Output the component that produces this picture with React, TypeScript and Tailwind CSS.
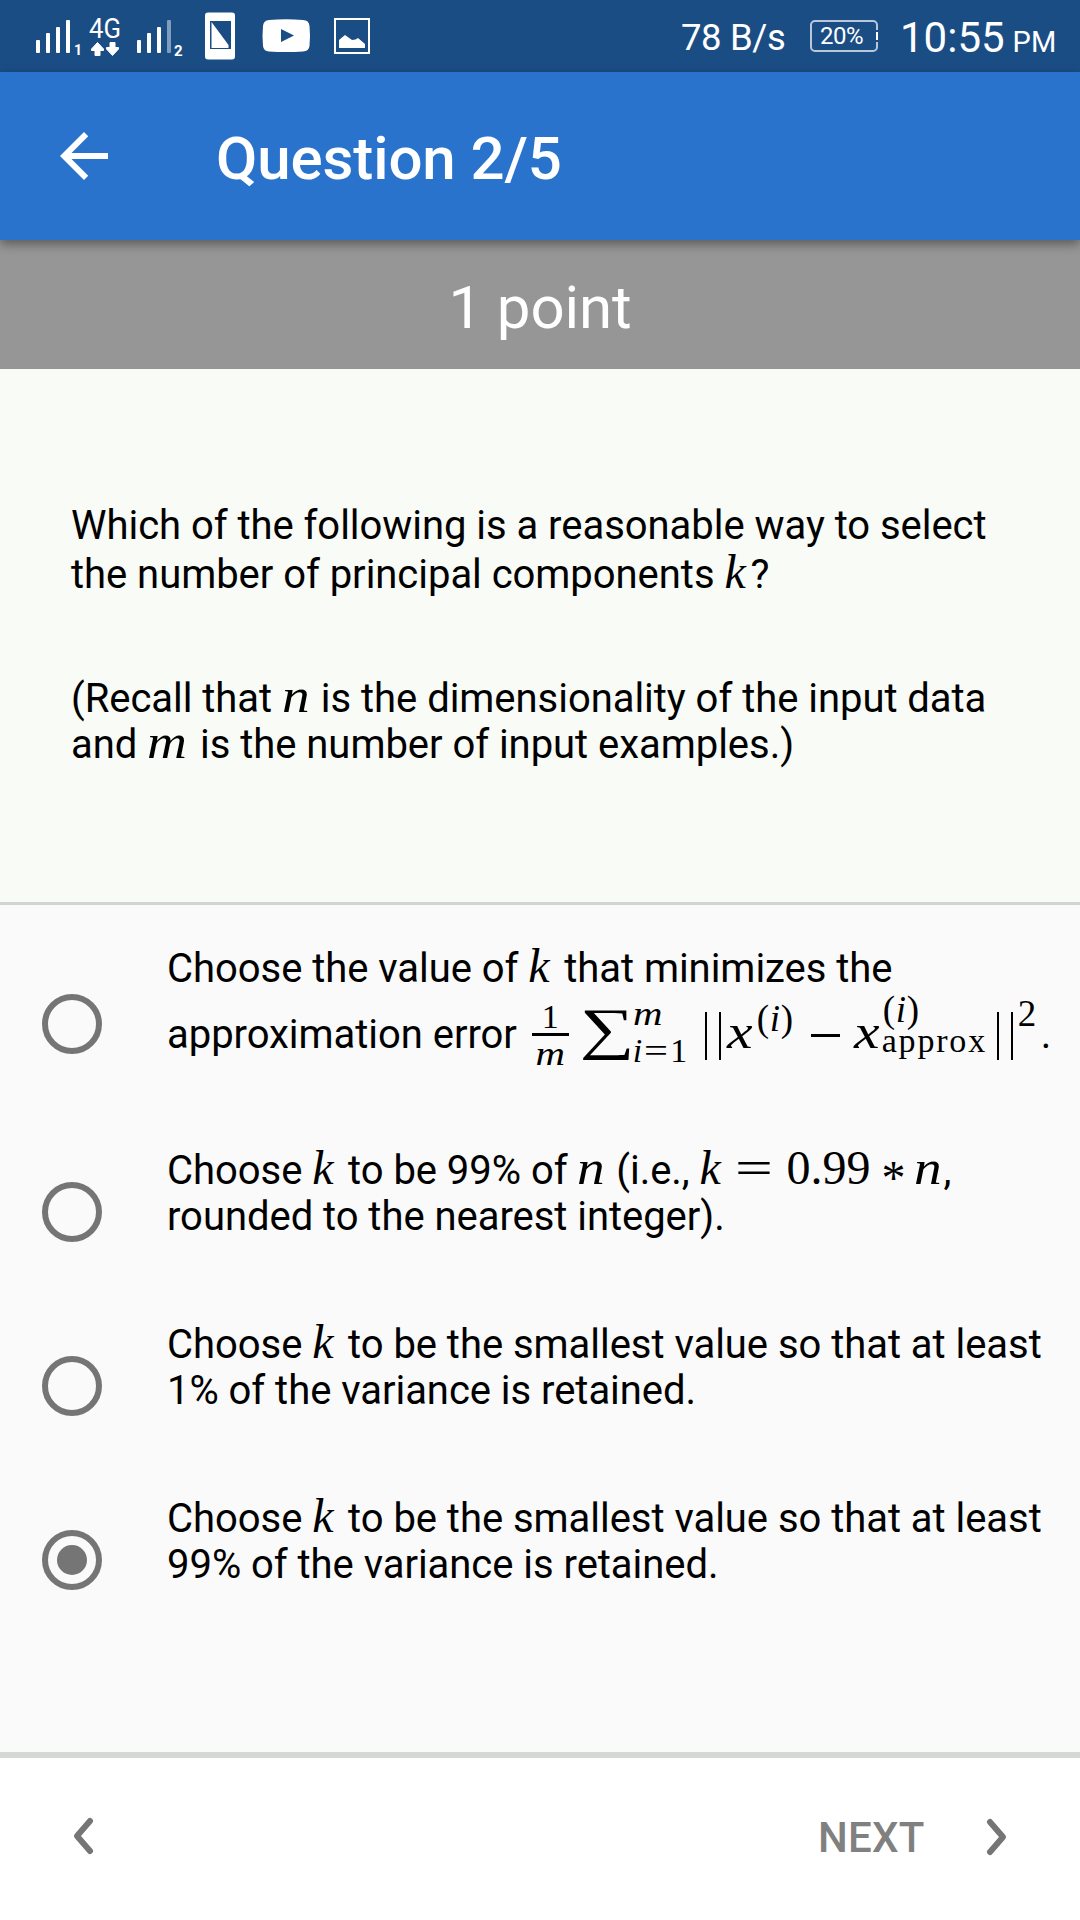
import type { ReactNode } from "react";

function V({ children, w = "w-[26px]" }: { children: ReactNode; w?: string }) {
  return (
    <span className={`inline-block origin-left font-['Liberation_Serif',serif] text-[48px] leading-[0] italic ${w}`}>{children}</span>
  );
}

function Line({ children, h = "h-[46px]" }: { children: ReactNode; h?: string }) {
  return <div className={`whitespace-nowrap leading-[46px] tracking-[-0.04px] ${h}`}>{children}</div>;
}

function Option({ children, checked, h, radio }: { children: ReactNode; checked?: boolean; h: string; radio: string }) {
  return (
    <div className={`flex shrink-0 ${h}`}>
      <div className={`ml-[42px] flex size-[60px] shrink-0 items-center justify-center rounded-full border-6 border-[#757575] ${radio}`}>
        {checked && <div className="size-[30px] rounded-full bg-[#757575]" />}
      </div>
      <div className="ml-[65px]">{children}</div>
    </div>
  );
}

function Bars() {
  return (
    <span className="inline-flex h-[48px] w-[16px] justify-between align-[-12px]">
      <span className="w-[2px] bg-black" />
      <span className="w-[2px] bg-black" />
    </span>
  );
}

function Formula() {
  return (
    <span className="font-['Liberation_Serif',serif] text-[34px]">
      <span className="-mt-[20px] ml-[5px] inline-flex h-[63px] w-[37px] flex-col items-center align-[20px] leading-none">
        <span className="h-[30px] shrink-0 leading-[27px]">1</span>
        <span className="h-[3px] w-full shrink-0 bg-black" />
        <span className="h-[30px] scale-x-120 italic leading-[36px]">m</span>
      </span>
      <span className="ml-[11px] inline-block w-[51px] origin-left scale-x-135 align-[0px] text-[57px] leading-[0]">∑</span>
      <span className="ml-[2px] inline-block w-0 align-[23px] italic leading-[0]"><span className="inline-block origin-left scale-x-120">m</span></span>
      <span className="inline-block w-[72px] align-[-14px] leading-[0]"><i>i</i><span className="ml-[2px] inline-block origin-left scale-x-125">=</span><span className="ml-[7px]">1</span></span>
      <Bars />
      <span className="ml-[6px] inline-block w-[30px] origin-left scale-x-120 text-[48px] italic leading-[0]">x</span>
      <span className="inline-block w-[54px] align-[17px] text-[37px] leading-[0] tracking-[0.7px]">(<i>i</i>)</span>
      <span className="inline-block h-[3px] w-[29px] bg-black align-[11px]" />
      <span className="ml-[14px] inline-block w-[29px] origin-left scale-x-120 text-[48px] italic leading-[0]">x</span>
      <span className="-mt-[8px] inline-block w-0 align-[26px] text-[37px] leading-[0] tracking-[0.7px]">(<i>i</i>)</span>
      <span className="-ml-[1px] inline-block w-[115px] align-[-4px] leading-[0] tracking-[1.8px]">approx</span>
      <Bars />
      <span className="ml-[5px] inline-block w-[23px] align-[22px] text-[37px] leading-[0]">2</span>
    </span>
  );
}

export default function App() {
  return (
    <div className="flex h-[1920px] w-[1080px] flex-col overflow-hidden bg-[#fafafa] font-[Roboto,sans-serif] text-[40px] text-black">
      <header className="flex h-[72px] shrink-0 items-start bg-[#1b4d85] text-white">
        <svg width="400" height="72" viewBox="0 0 400 72" fill="none" className="shrink-0">
          <g fill="#fff">
            <rect x="36" y="40" width="4" height="13" rx="1" />
            <rect x="46" y="33" width="4" height="20" rx="1" />
            <rect x="56" y="27" width="4" height="26" rx="1" />
            <rect x="66" y="20" width="4" height="33" rx="1" />
            <rect x="137" y="40" width="4" height="13" rx="1" />
            <rect x="147" y="33" width="4" height="20" rx="1" />
            <rect x="157" y="27" width="4" height="26" rx="1" />
            <rect x="167" y="20" width="4" height="33" rx="1" opacity=".45" />
            <path strokeLinejoin="round" stroke="#fff" strokeWidth="1" d="M97.500 42.500l6 6.500v1.500h-3.500v5h-5v-5h-3.500V49zM112.500 55.500l-6-6.500v-1.500h3.500v-5h5v5h3.500V49z" />
            <path fillRule="evenodd" d="M208 12.500h24q3 0 3 3v41q0 3-3 3h-24q-3 0-3-3v-41q0-3 3-3zM210 21v28h21V21z" />
            <path d="M211.500 22L228.500 45v3h-17z" />
            <path fillRule="evenodd" d="M269 20q17-1.500 34 0q6 0 6.500 6q1 10 0 20q-.5 5-6.500 5.500q-17 1-34 0q-5.500-.5-6-5.500q-1-10 0-20q.5-5.500 6-6zM281 29v13l13-6.500z" />
            <path d="M339 48v-8l6-5 7 5q4 0 6-2l7 6v4z" />
          </g>
          <rect x="335" y="19" width="34" height="34" stroke="#fff" strokeWidth="2" />
          <text x="89" y="37.500" fontFamily="Roboto" fontSize="28" textLength="32" lengthAdjust="spacingAndGlyphs" fill="#fff">4G</text>
          <text x="74" y="55" fontFamily="Roboto" fontWeight="700" fontSize="14" fill="#fff">1</text>
          <text x="174" y="55.500" fontFamily="Roboto" fontWeight="700" fontSize="15" fill="#fff">2</text>
        </svg>
        <span className="ml-[281px] w-[129px] whitespace-nowrap text-[36.500px] leading-[75px] tracking-[-0.4px]">78 B/s</span>
        <span className="mt-[20px] flex h-[32px] w-[68px] shrink-0 items-center rounded-[5px] border-2 border-[#b8c8da] pl-[8px] text-[24px] tracking-[-0.5px]">
          20%
          <svg width="3" height="12" viewBox="0 0 3 12" className="-mr-[2px] ml-auto"><path d="M1.500 0V12" stroke="#1b4d85" strokeWidth="3" /><path d="M2 2V10" stroke="#fff" strokeWidth="2" /></svg>
        </span>
        <span className="ml-[22px] whitespace-nowrap text-[42px] leading-[75px]">10:55<span className="ml-[8px] text-[29px]">PM</span></span>
      </header>

      <div className="z-10 flex h-[168px] shrink-0 items-center bg-[#2a73cc] text-white shadow-[0_4px_10px_rgba(0,0,0,0.4)]">
        <svg width="72" height="72" viewBox="0 0 24 24" fill="#fff" className="ml-[48px]"><path d="M20 11H7.830l5.590-5.590L12 4l-8 8 8 8 1.410-1.410L7.830 13H20v-2z" /></svg>
        <h1 className="ml-[96px] mt-[5px] text-[60px] font-medium leading-[70px] tracking-[-0.1px]">Question 2/5</h1>
      </div>

      <div className="flex h-[129px] shrink-0 justify-center bg-[#969696] text-[60px] leading-[135px] tracking-[-0.1px] text-white">1 point</div>

      <section className="h-[536px] shrink-0 border-b-[3px] border-[#d3d3d3] bg-[#f9fbf6] pl-[71px] pt-[134px]">
        <Line h="h-[49px]">Which of the following is a reasonable way to select</Line>
        <Line h="h-[124px]">the number of principal components <V>k</V>?</Line>
        <Line>(Recall that <V w="w-[29px] scale-x-115">n</V> is the dimensionality of the input data</Line>
        <Line>and <V w="w-[43px] scale-x-115">m</V> is the number of input examples.)</Line>
      </section>

      <main className="flex h-[847px] shrink-0 flex-col pt-[41px]">
        <Option h="h-[202px]" radio="mt-[48px]">
          <Line h="h-[66px]">Choose the value of <V>k</V> that minimizes the</Line>
          <Line>approximation error <Formula />.</Line>
        </Option>
        <Option h="h-[174px]" radio="mt-[34px]">
          <Line>
            Choose <V>k</V> to be 99% of <V w="w-[29px] scale-x-115">n</V> (i.e., <V w="w-[35px]">k</V>
            <span className="font-['Liberation_Serif',serif] text-[48px] leading-[0]">
              <span className="inline-block w-[52px] origin-left scale-x-140">=</span>0.99
              <span className="ml-[11px] inline-block w-[33px] align-[-10px]">*</span>
            </span>
            <V w="w-[29px] scale-x-115">n</V>,
          </Line>
          <Line>rounded to the nearest integer).</Line>
        </Option>
        <Option h="h-[174px]" radio="mt-[34px]">
          <Line>Choose <V>k</V> to be the smallest value so that at least</Line>
          <Line>1% of the variance is retained.</Line>
        </Option>
        <Option h="h-[174px]" radio="mt-[34px]" checked>
          <Line>Choose <V>k</V> to be the smallest value so that at least</Line>
          <Line>99% of the variance is retained.</Line>
        </Option>
      </main>

      <footer className="flex h-[168px] shrink-0 items-start border-t-6 border-[#d6d8d5] bg-white text-[#808080]">
        <svg width="26" height="42" viewBox="0 0 26 42" className="ml-[70px] mt-[57px]"><path d="M20 6L7 21L20 36" fill="none" stroke="#757575" strokeWidth="6" strokeLinecap="round" strokeLinejoin="round" /></svg>
        <span className="ml-[722px] w-[166px] text-[42px] font-medium leading-[160px] tracking-[0.2px]">NEXT</span>
        <svg width="26" height="42" viewBox="0 0 26 42" className="mt-[58px]"><path d="M6 6L19 21L6 36" fill="none" stroke="#757575" strokeWidth="6" strokeLinecap="round" strokeLinejoin="round" /></svg>
      </footer>
    </div>
  );
}
